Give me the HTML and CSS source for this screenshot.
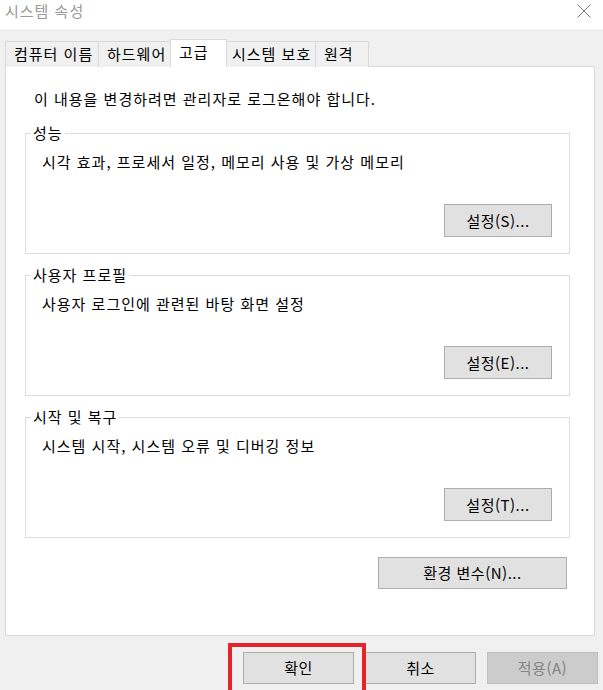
FILE: index.html
```html
<!DOCTYPE html>
<html lang="ko">
<head>
<meta charset="utf-8">
<link rel="stylesheet" href="styles.css">
</head>
<body>
<div class="window">
  <div class="titlebar">
    <span class="title">시스템 속성</span>
    <svg class="close" width="14" height="14" viewBox="0 0 14 14"><path d="M0.5 0.5 L13.5 13.5 M13.5 0.5 L0.5 13.5" stroke="#7a7a7a" stroke-width="1" fill="none"/></svg>
  </div>
  <div class="body">
    <div class="tabs">
      <div class="tab t1">컴퓨터 이름</div>
      <div class="tab t2">하드웨어</div>
      <div class="tab t3 active">고급</div>
      <div class="tab t4">시스템 보호</div>
      <div class="tab t5">원격</div>
    </div>
    <div class="panel">
      <div class="info">이 내용을 변경하려면 관리자로 로그온해야 합니다.</div>
      <fieldset class="group">
        <legend>성능</legend>
        <div class="gb-body">
          <div class="desc">시각 효과, 프로세서 일정, 메모리 사용 및 가상 메모리</div>
          <div class="btn-row"><button class="btn small">설정(S)...</button></div>
        </div>
      </fieldset>
      <fieldset class="group">
        <legend>사용자 프로필</legend>
        <div class="gb-body">
          <div class="desc">사용자 로그인에 관련된 바탕 화면 설정</div>
          <div class="btn-row"><button class="btn small">설정(E)...</button></div>
        </div>
      </fieldset>
      <fieldset class="group">
        <legend>시작 및 복구</legend>
        <div class="gb-body">
          <div class="desc">시스템 시작, 시스템 오류 및 디버깅 정보</div>
          <div class="btn-row"><button class="btn small">설정(T)...</button></div>
        </div>
      </fieldset>
      <div class="env-row"><button class="btn env">환경 변수(N)...</button></div>
    </div>
    <div class="footer">
      <div class="ok-wrap">
        <button class="btn dlg">확인</button>
        <div class="highlight"></div>
      </div>
      <button class="btn dlg">취소</button>
      <button class="btn dlg disabled">적용(A)</button>
    </div>
  </div>
</div>
</body>
</html>
```

FILE: styles.css
```css
* { box-sizing: border-box; }
html, body {
  margin: 0;
  padding: 0;
}
body {
  width: 603px;
  height: 690px;
  overflow: hidden;
  background: #f0f0f0;
  font-family: "Noto Sans CJK KR", "Noto Sans", sans-serif;
  font-size: 15px;
  letter-spacing: 1px;
  color: #000;
}
.window {
  width: 603px;
  height: 690px;
  display: flex;
  flex-direction: column;
}
.titlebar {
  height: 29px;
  background: #fff;
  display: flex;
  align-items: center;
  justify-content: space-between;
  padding: 0 12px 0 5px;
  flex-shrink: 0;
}
.title {
  color: #9a9a9a;
  font-size: 15px;
  line-height: 20px;
  margin-top: -8px;
}
.close {
  margin-top: -8px;
}
.body {
  padding: 10px 8px 0 5px;
  display: flex;
  flex-direction: column;
}
.tabs {
  display: flex;
  align-items: flex-end;
  height: 28px;
  position: relative;
  z-index: 2;
  margin-bottom: -1px;
}
.tab {
  height: 26px;
  border: 1px solid #d9d9d9;
  border-bottom: none;
  margin-left: -1px;
  padding: 0 0 0 8px;
  line-height: 24px;
  background: #f0f0f0;
  white-space: nowrap;
  flex-shrink: 0;
}
.tab:first-child { margin-left: 0; }
.t1 { width: 94px; }
.t2 { width: 73px; }
.t3 { width: 57px; }
.t4 { width: 90px; padding-left: 5px; }
.t5 { width: 54px; }
.tab.active {
  height: 28px;
  background: #fff;
  line-height: 24px;
  position: relative;
  z-index: 3;
}
.panel {
  height: 570px;
  background: #fff;
  border: 1px solid #d9d9d9;
  padding: 22px 24px 0 19px;
  position: relative;
  z-index: 1;
}
.info {
  line-height: 20px;
  padding-left: 9px;
  margin-bottom: 14px;
}
.group {
  margin: 0 0 11px 0;
  padding: 0;
  border: 1px solid #dcdcdc;
  min-width: 0;
}
.group legend {
  margin-left: 5px;
  padding: 0 2px;
  line-height: 20px;
}
.gb-body {
  padding: 9px 17px 16px 16px;
}
.desc {
  line-height: 20px;
}
.btn-row {
  display: flex;
  justify-content: flex-end;
  margin-top: 32px;
}
.btn {
  font-family: inherit;
  font-size: 15px;
  letter-spacing: 0.5px;
  color: #000;
  background: #e1e1e1;
  border: 1px solid #adadad;
  border-radius: 0;
  padding: 0;
  margin: 0;
  height: 33px;
  line-height: 20px;
}
.btn.small { width: 108px; }
.env-row {
  display: flex;
  justify-content: flex-end;
  padding-right: 3px;
  margin-top: 19px;
}
.btn.env {
  width: 189px;
  height: 32px;
}
.footer {
  display: flex;
  justify-content: flex-end;
  gap: 11px;
  padding-top: 16px;
  margin-right: -3px;
}
.btn.dlg {
  width: 111px;
  height: 32px;
}
.btn.disabled {
  background: #cccccc;
  border-color: #bfbfbf;
  color: #838383;
}
.ok-wrap {
  position: relative;
}
.highlight {
  position: absolute;
  left: -15px;
  right: -12px;
  top: -9px;
  height: 60px;
  border: 4px solid #e3242b;
}
```
